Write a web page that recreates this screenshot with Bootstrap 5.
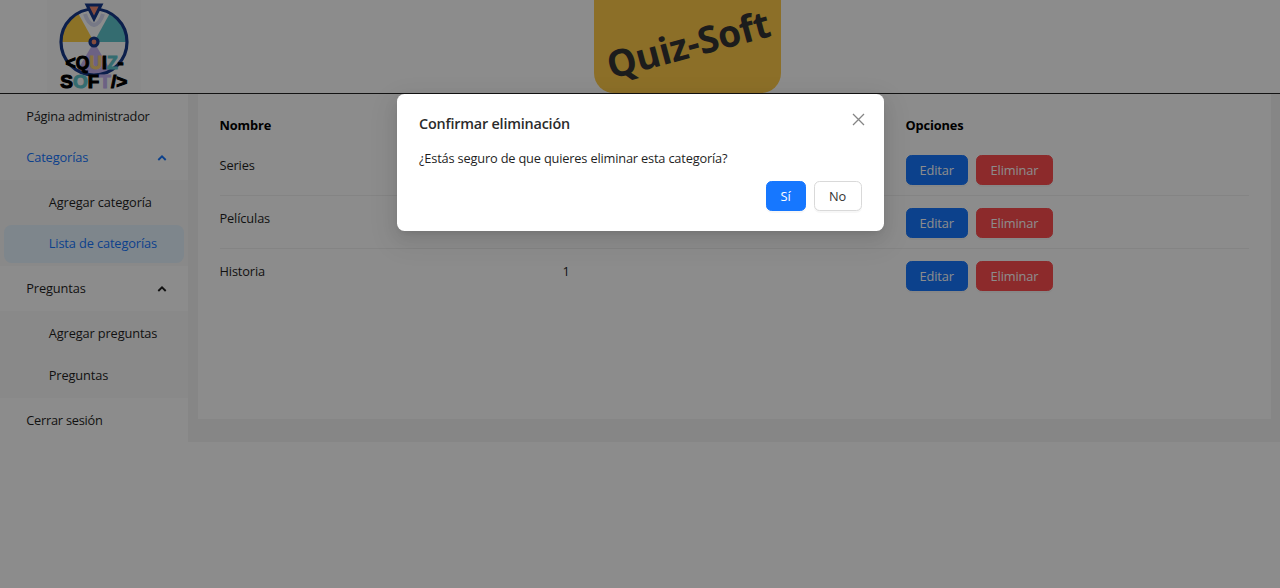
<!DOCTYPE html>
<html lang="es">
<head>
<meta charset="utf-8">
<meta name="viewport" content="width=device-width, initial-scale=1">
<title>Quiz-Soft</title>
<link href="https://cdn.jsdelivr.net/npm/bootstrap@5.3.0/dist/css/bootstrap.min.css" rel="stylesheet">
<style>
body{font-family:"Open Sans","Noto Sans",sans-serif;font-size:12.8px;line-height:20.6px;letter-spacing:-.13px;color:#1f1f1f;height:588px;overflow:hidden;background:#fff}
.topbar{height:94px;border-bottom:1px solid #222}
.logo-box{width:94px;height:93px;margin-left:47px;background:#fcfcfc}
.brand-tile{left:593.5px;top:0;width:187.5px;height:93px;background:#ffca4a;border-radius:0 0 20px 20px}
.brand-text{font-size:37.2px;font-weight:700;line-height:1;letter-spacing:-.3px;transform:translate(.5px,-3px) rotate(-15deg);white-space:nowrap;color:#333}
.page{height:347.5px;background:#f5f5f5}
.side{width:187.5px;background:#fff;padding-top:3.5px}
.side a{display:flex;align-items:center;justify-content:space-between;height:37.5px;margin:0 3.75px 3.75px;padding:0 17px 0 22.5px;border-radius:7.5px;color:#1f1f1f;text-decoration:none;white-space:nowrap}
.side a.tight{letter-spacing:-.24px}
.side .sub{display:flow-root;background:#fafafa;padding-top:3.75px;margin-bottom:3.75px}
.side .sub a{padding-left:45px}
.side a.sel{background:#e6f4ff;color:#1677ff}
.side a.open{color:#1677ff}
.panel{width:1073.5px;height:325px;margin-left:10px;background:#fff;padding:13.3px 22.5px 0 22px}
.line{height:53.4px;padding-top:12.2px;border-bottom:1px solid #f0f0f0}
.line:last-child{border:0}
.abtn{--bs-btn-font-size:12.8px;--bs-btn-line-height:20.6px;--bs-btn-padding-y:4px;--bs-btn-padding-x:0;--bs-btn-border-radius:5.6px;--bs-btn-color:#fff;height:30px;letter-spacing:-.13px;box-shadow:0 2px 0 rgba(0,0,0,.03)}
.b-blue{--bs-btn-bg:#1677ff;--bs-btn-border-color:#1677ff}
.b-red{--bs-btn-bg:#ff4d4f;--bs-btn-border-color:#ff4d4f}
.b-white{--bs-btn-bg:#fff;--bs-btn-border-color:#d9d9d9;--bs-btn-color:#333}
.w-edit{width:62.5px}
.w-del{width:77px}
.shade{inset:0;background:rgba(0,0,0,.45);z-index:10}
.dialog-box{left:396.5px;top:94px;width:487.5px;height:136.5px;background:#fff;border-radius:7.5px;padding:19px 22.5px;z-index:11;letter-spacing:-.18px;box-shadow:0 6px 15px rgba(0,0,0,.08),0 3px 6px -4px rgba(0,0,0,.12),0 9px 26px 8px rgba(0,0,0,.05)}
.dialog-box h1{font-size:14.4px;font-weight:600;line-height:22.5px;letter-spacing:-.2px;margin:0 0 12px;color:#2b2b2b}
.dialog-actions{margin-top:13.2px}
.shut{left:455px;top:19px}
</style>
</head>
<body class="position-relative">
<header class="topbar bg-white position-relative">
  <div class="logo-box">
    <svg width="94" height="93" viewBox="47 0 94 93" letter-spacing="0" font-family="Liberation Sans,sans-serif" font-weight="700" font-size="18">
      <circle cx="94" cy="42" r="33" fill="#fff"/>
      <path d="M94 42H61A33 33 0 0 1 78 13Z" fill="#ffcf48"/>
      <path d="M94 42H127A33 33 0 0 0 110 13Z" fill="#60c5cc"/>
      <path d="M94 42L77 71A33 33 0 0 0 111 71Z" fill="#c5b2f1"/>
      <path d="M85 14Q88 24 94 25Q100 24 103 14" fill="none" stroke="#d9dcf5" stroke-width="4"/>
      <circle cx="94" cy="42" r="33" fill="none" stroke="#17398a" stroke-width="3.2"/>
      <path d="M87 5H101L94 19Z" fill="#f28a72" stroke="#17398a" stroke-width="3"/>
      <circle cx="94" cy="42" r="4" fill="#f28a72" stroke="#17398a" stroke-width="3.2"/>
      <g stroke-width="1">
      <text y="68.7" x="65.5" textLength="58" lengthAdjust="spacingAndGlyphs"><tspan stroke="#000">&lt;Q</tspan><tspan fill="#f7cf75" stroke="#f7cf75">U</tspan><tspan stroke="#000">I</tspan><tspan fill="#60c5cc" stroke="#60c5cc">Z</tspan><tspan stroke="#000">-</tspan></text>
      <text y="87.8" x="60.3" textLength="67" lengthAdjust="spacingAndGlyphs"><tspan stroke="#000">S</tspan><tspan fill="#60c5cc" stroke="#60c5cc">O</tspan><tspan stroke="#000">F</tspan><tspan fill="#c5b2f1" stroke="#c5b2f1">T</tspan><tspan stroke="#000">/&gt;</tspan></text>
      </g>
    </svg>
  </div>
  <div class="brand-tile position-absolute d-flex align-items-center justify-content-center"><div class="brand-text">Quiz-Soft</div></div>
</header>
<div class="page d-flex">
  <nav class="side flex-shrink-0">
    <a href="#" class="tight">Página administrador</a>
    <a href="#" class="open">Categorías<svg width="10" height="10" viewBox="0 0 10 10"><path d="M1.3 7L5 3.4L8.7 7" fill="none" stroke="currentColor" stroke-width="1.9"/></svg></a>
    <div class="sub"><a href="#">Agregar categoría</a><a href="#" class="sel">Lista de categorías</a></div>
    <a href="#">Preguntas<svg width="10" height="10" viewBox="0 0 10 10"><path d="M1.3 7L5 3.4L8.7 7" fill="none" stroke="currentColor" stroke-width="1.9"/></svg></a>
    <div class="sub"><a href="#">Agregar preguntas</a><a href="#">Preguntas</a></div>
    <a href="#" class="tight">Cerrar sesión</a>
  </nav>
  <main class="panel">
    <div class="row g-0 fw-bold pt-2 text-black" style="height:35.1px"><div class="col-4">Nombre</div><div class="col-4"></div><div class="col-4">Opciones</div></div>
    <div>
      <div class="line row g-0"><div class="col-4">Series</div><div class="col-4"></div><div class="col-4 d-flex gap-2"><button class="btn abtn b-blue w-edit">Editar</button><button class="btn abtn b-red w-del">Eliminar</button></div></div>
      <div class="line row g-0"><div class="col-4">Películas</div><div class="col-4"></div><div class="col-4 d-flex gap-2"><button class="btn abtn b-blue w-edit">Editar</button><button class="btn abtn b-red w-del">Eliminar</button></div></div>
      <div class="line row g-0"><div class="col-4">Historia</div><div class="col-4">1</div><div class="col-4 d-flex gap-2"><button class="btn abtn b-blue w-edit">Editar</button><button class="btn abtn b-red w-del">Eliminar</button></div></div>
    </div>
  </main>
</div>
<div class="shade position-absolute"></div>
<div class="dialog-box position-absolute" role="dialog">
  <h1>Confirmar eliminación</h1>
  <svg class="shut position-absolute" width="13" height="13" viewBox="0 0 13 13"><path d="M1 1L12 12M12 1L1 12" stroke="#858585" stroke-width="1.3"/></svg>
  <div>¿Estás seguro de que quieres eliminar esta categoría?</div>
  <div class="dialog-actions d-flex justify-content-end gap-2"><button class="btn abtn b-blue" style="width:40px">Sí</button><button class="btn abtn b-white" style="width:48px">No</button></div>
</div>
<script src="https://cdn.jsdelivr.net/npm/bootstrap@5.3.0/dist/js/bootstrap.bundle.min.js"></script>
</body>
</html>
